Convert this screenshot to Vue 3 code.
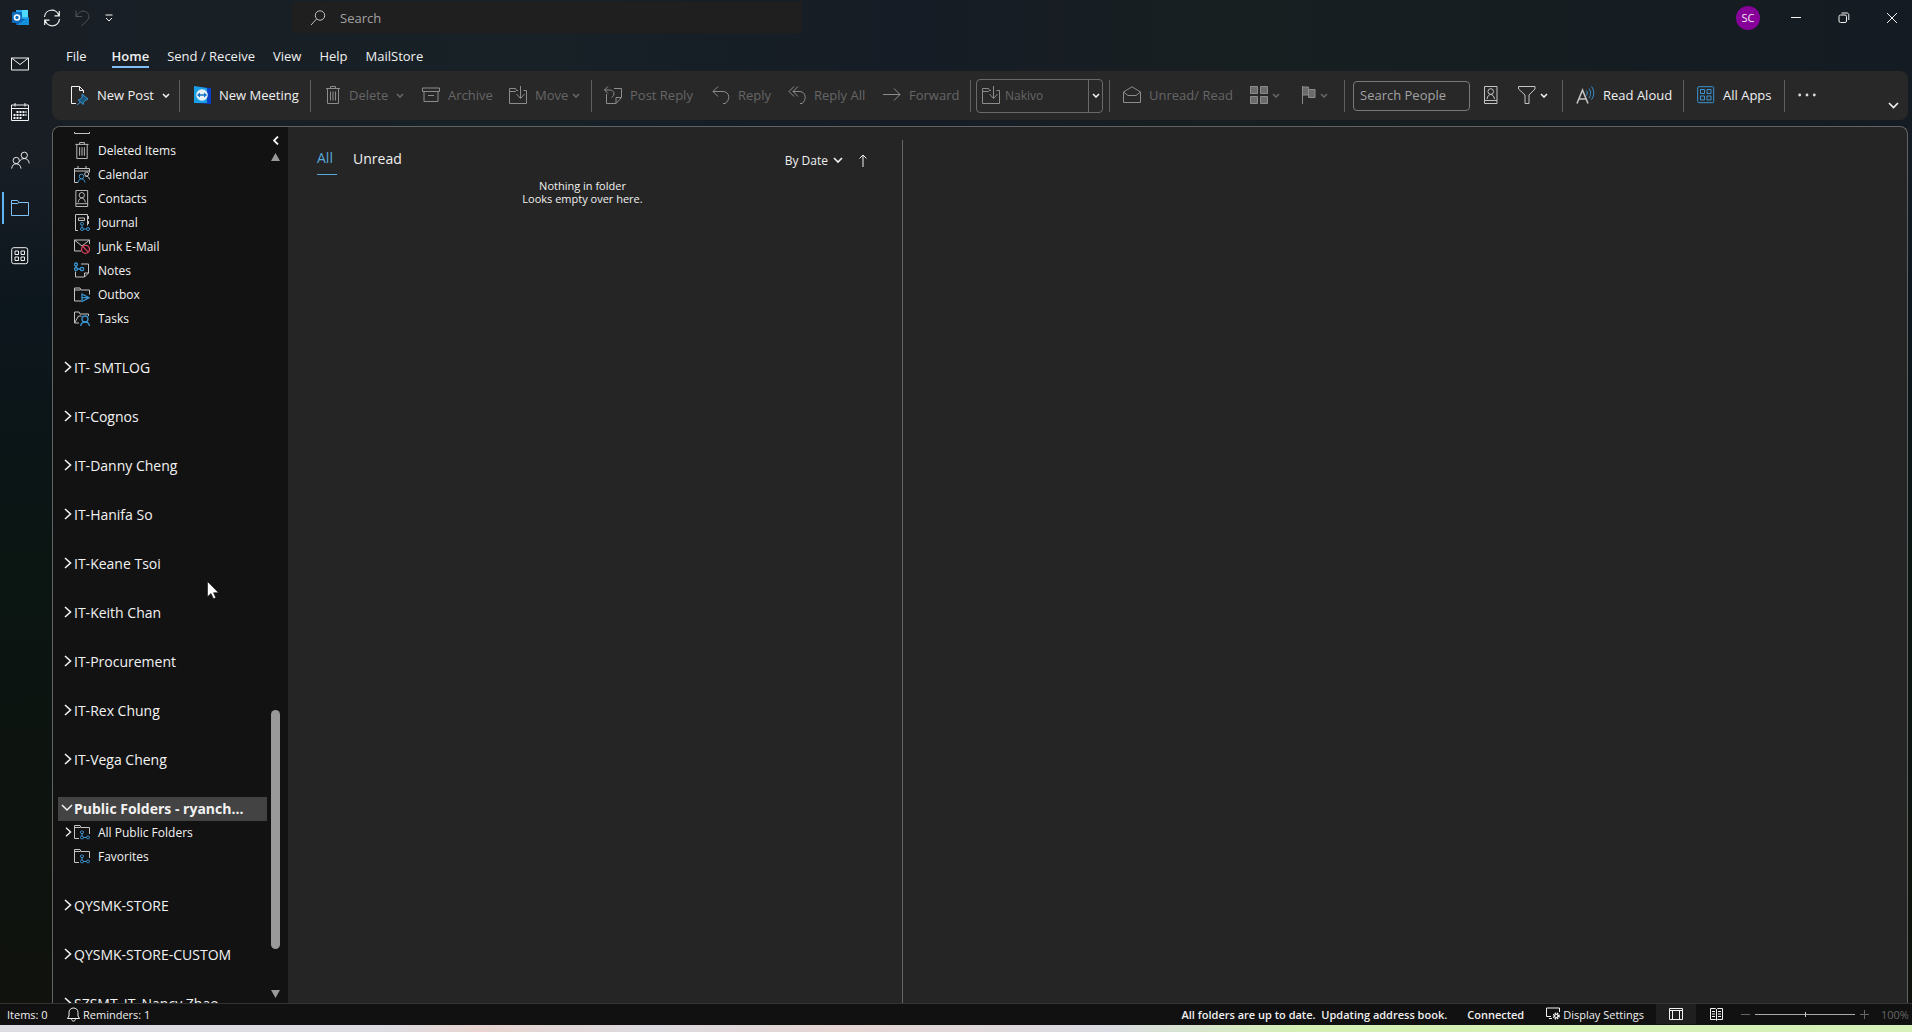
<script setup>
import { ref } from 'vue'

const search = ref('')
const people = ref('')
const zoom = ref(50)

const tabs = ['File', 'Home', 'Send / Receive', 'View', 'Help', 'MailStore']

const defaultFolders = [
  { name: 'Deleted Items', icon: 'trash' },
  { name: 'Calendar', icon: 'calendar' },
  { name: 'Contacts', icon: 'contacts' },
  { name: 'Journal', icon: 'journal' },
  { name: 'Junk E-Mail', icon: 'junk' },
  { name: 'Notes', icon: 'notes' },
  { name: 'Outbox', icon: 'outbox' },
  { name: 'Tasks', icon: 'tasks' },
]

const accounts = [
  { name: 'IT- SMTLOG' },
  { name: 'IT-Cognos' },
  { name: 'IT-Danny Cheng' },
  { name: 'IT-Hanifa So' },
  { name: 'IT-Keane Tsoi' },
  { name: 'IT-Keith Chan' },
  { name: 'IT-Procurement' },
  { name: 'IT-Rex Chung' },
  { name: 'IT-Vega Cheng' },
  {
    name: 'Public Folders - ryanch...',
    open: true,
    children: [{ name: 'All Public Folders', expandable: true }, { name: 'Favorites' }],
  },
  { name: 'QYSMK-STORE' },
  { name: 'QYSMK-STORE-CUSTOM' },
  { name: 'SZSMT_IT_Nancy Zhao' },
]
</script>

<template>
  <div class="app">
    <svg class="defs" width="0" height="0" aria-hidden="true">
      <symbol id="chev" viewBox="0 0 8 5"><path d="M1 1l3 3 3-3" fill="none" stroke="currentColor" stroke-width="1.6" /></symbol>
      <symbol id="chev-right" viewBox="0 0 8 12"><path d="M1 1l5.500 5L1 11" fill="none" stroke="currentColor" stroke-width="1.6" /></symbol>
      <symbol id="trash" viewBox="0 0 16 18"><path d="M1 2.500h14M5.500 2.500v-2h5v2M2.500 2.500v15h11v-15M5.500 5.500v9M8 5.500v9M10.500 5.500v9" /></symbol>
      <symbol id="movefolder" viewBox="0 0 18 18"><path d="M9 4.500H7.500L6.500 2.500h-6v15h17v-13h-3M.5 5.500h6l1-1M11.500 0v12M7.500 8l4 4.500 4-4.500" /></symbol>
      <symbol id="contacts" viewBox="0 0 14 18"><path d="M.5.5h12.500v17H.5zM.5 14.500h12.500M3 13c.5-3 2-4.500 3.750-4.500S10 10 10.500 13" /><circle cx="6.750" cy="5.500" r="2.800" /></symbol>
      <symbol id="calendar" viewBox="0 0 16 17"><path d="M4 16.500H.5V2.500h15v4M.5 5h15M4 0v3M12 0v3" /><circle cx="12.700" cy="8" r="2" /><path d="M11.500 10.500c2-.8 3.500.5 4 3" /><g class="blue"><circle cx="7.500" cy="10.500" r="2.300" /><path d="M4 16.500c.5-2.500 1.700-3.600 3.500-3.600s3 1.100 3.500 3.600" /></g></symbol>
      <symbol id="journal" viewBox="0 0 16 17"><path d="M4 16.500H1.500V.5h12v11M4.500 4h6v2.500h-6zM14.500 2v3M14.500 7v3" /><use href="#nodes" class="blue" x="5" y="8" width="11" height="9" /></symbol>
      <symbol id="nodes" viewBox="0 0 11 9"><circle cx="3" cy="1.700" r="1.500" /><path d="M3 3.500v2M4.500 7h3" /><circle cx="3" cy="7" r="1.500" /><circle cx="9" cy="7" r="1.500" /></symbol>
      <symbol id="junk" viewBox="0 0 16 16"><path d="M7 12.500H.5v-11h15v4M.5 1.500l7.500 6 7.500-6" /><g class="red" stroke-width="1.300"><circle cx="11.500" cy="10.800" r="4" /><path d="M8.700 8l5.600 5.600" /></g></symbol>
      <symbol id="notes" viewBox="0 0 16 16"><path d="M1.500 9v5.500h9l4-4V1.500H7M10.500 14.500v-4h4" /><g class="blue" stroke-width="1.300"><circle cx="2" cy="2" r="1.500" /><circle cx="2" cy="6.500" r="1.500" /><circle cx="8" cy="6.500" r="1.700" /><path d="M2 3.500v1.500M3.500 6.500h3" /></g></symbol>
      <symbol id="outbox" viewBox="0 0 16 16"><path d="M7 14.500H.5v-13H6l1 2h8.500V8M.5 3.500h6" /><path class="blue" stroke-width="1.300" d="M8 7.500l7 3.700-7 3.800v-3zM8 11.200h7" /></symbol>
      <symbol id="tasks" viewBox="0 0 16 16"><path d="M5 12.500H.5v-11H5l1 2h8.500v2M.5 12.500L4.500 5.500h3" /><g class="blue" stroke-width="1.300"><circle cx="11" cy="8.500" r="3" /><path d="M6.700 15.500c.4-2.700 2-4 4.300-4s4 1.300 4.500 4" /></g></symbol>
      <symbol id="shared" viewBox="0 0 16 16"><path d="M5 14.500H.5v-13H6l1 2h8.500V10M.5 3.500h6" /><use href="#nodes" class="blue" x="5" y="6.500" width="11" height="9" /></symbol>
    </svg>

    <header class="titlebar">
      <div class="quick">
        <svg class="logo" width="17" height="17" viewBox="0 0 17 17"><path fill="#28a8ea" d="M4 1h12v14H4z" /><path fill="#50d9ff" d="M10 1h6v7h-6z" /><path fill="#0a5ca8" d="M4 10h13v6H4z" /><path fill="#1490df" d="M10 12l7-4v8H5z" /><rect fill="#0f6cbd" y="3" width="10" height="11" rx="1" /><circle cx="5" cy="8.500" r="2.500" fill="none" stroke="#fff" stroke-width="1.600" /></svg>
        <button aria-label="Send and receive all folders"><svg width="18" height="18" viewBox="0 0 18 18" class="ic bright"><path stroke-width="1.200" d="M1.500 8A7.300 7.300 0 0 1 15.800 6.500M16.500 10A7.300 7.300 0 0 1 2.200 11.500M16.300 2v4.800h-4.800M1.700 16v-4.800h4.800" /></svg></button>
        <button aria-label="Undo" disabled><svg width="16" height="18" viewBox="0 0 16 18" class="ic dim"><path d="M1 1.500v6h6M1 7.500C4 3 7 1 10.500 2.500c4 2 4.500 6 1.500 9L6.500 17" /></svg></button>
        <button aria-label="Customize quick access toolbar"><svg width="8" height="8" viewBox="0 0 8 8" class="ic bright"><path d="M.5 1h7M1 4l3 3 3-3" /></svg></button>
      </div>
      <label class="search">
        <svg width="16" height="16" viewBox="0 0 16 16" class="ic"><circle cx="10" cy="5.500" r="4.700" /><path d="M6.500 9L1 15" /></svg>
        <input v-model="search" type="text" placeholder="Search" aria-label="Search" />
      </label>
      <button class="avatar" aria-label="Account">SC</button>
      <div class="window-controls">
        <button aria-label="Minimize"><svg width="12" height="12" viewBox="0 0 12 12" class="ic bright"><path d="M1 5.500h10" /></svg></button>
        <button aria-label="Restore"><svg width="12" height="12" viewBox="0 0 12 12" class="ic bright"><rect x="1" y="3" width="7.500" height="7.500" rx="1.500" /><path d="M3.500 1h5.500c1 0 1.800.8 1.800 1.800v5.200" /></svg></button>
        <button aria-label="Close"><svg width="12" height="12" viewBox="0 0 12 12" class="ic bright"><path d="M1 1l10 10M11 1L1 11" /></svg></button>
      </div>
    </header>

    <div class="body">
      <nav class="rail" aria-label="Modules">
        <button aria-label="Mail"><svg width="18" height="18" viewBox="0 0 18 18" class="ic bright"><path d="M.5 3h17v12H.5zM.5 3L9 9.500 17.500 3" /></svg></button>
        <button aria-label="Calendar"><svg width="18" height="18" viewBox="0 0 18 18" class="ic bright"><path d="M.5 2h17v15.500H.5zM.5 5.500h17M4 0v3.500M14 0v3.500" /><path stroke-dasharray="2 1" stroke-width="2" d="M5.500 9h10M2.500 12h13M2.500 15h8" /></svg></button>
        <button aria-label="People"><svg width="19" height="19" viewBox="0 0 20 19" class="ic bright"><circle cx="5.500" cy="9.500" r="3.300" /><circle cx="14" cy="4" r="3.300" /><path d="M.7 18c.5-3.500 2-5 4.800-5s4.500 1.500 5 5M9 10.500c1-2 2.500-3 5-3 3 0 4.700 1.500 5.200 5" /></svg></button>
        <button class="active" aria-label="Folders"><svg width="18" height="18" viewBox="0 0 18 18" class="ic"><path d="M.5 16.500v-15h6l1.500 2h9.500v13zM.5 4.500h6l1.500-1" /></svg></button>
        <button aria-label="More apps"><svg width="18" height="18" viewBox="0 0 18 18" class="ic bright"><rect x=".7" y=".7" width="16" height="16" rx="2" /><path d="M4 4h3.500v3.500H4zM10 4h3.500v3.500H10zM4 10h3.500v3.500H4zM10 10h3.500v3.500H10z" /></svg></button>
      </nav>

      <div class="workspace">
        <nav class="tabs" aria-label="Ribbon tabs">
          <button v-for="t in tabs" :key="t" :class="{ current: t === 'Home' }">{{ t }}</button>
        </nav>

        <div class="ribbon">
          <button class="post"><svg width="18" height="19" viewBox="0 0 18 19" class="ic bright"><path d="M5 17.500H.5V.5h8l4 4V7M8.500.5v4h4" /><path class="blue" fill="#1c557a" d="M11 8l6 5-1.500 1-1 .2-2 2.300-.3 2-5-4.500 2-.5 2-2.500zM9.500 16L6 19" /></svg>New Post<svg class="chev"><use href="#chev" /></svg></button>
          <i class="sep"></i>
          <button><svg width="17" height="18" viewBox="0 0 17 18"><path fill="#0a3fc4" d="M2 1l15 1v16L2 17z" /><path fill="#1ba0e8" d="M0 0l13 2v15L0 17z" /><circle cx="8" cy="9" r="5.800" fill="#e8f0f8" /><path fill="#1172c8" d="M3 9l3-2.500v1.700h4V6.500L13 9l-3 2.500V9.800H6v1.700z" /></svg>New Meeting</button>
          <i class="sep"></i>
          <button disabled><svg width="16" height="18" class="ic"><use href="#trash" /></svg>Delete<svg class="chev"><use href="#chev" /></svg></button>
          <button disabled><svg width="18" height="16" viewBox="0 0 18 16" class="ic"><path d="M.5 1h17v3.500H.5zM2 4.500v10h14v-10M6 8.500h6" /></svg>Archive</button>
          <button disabled class="tight"><svg width="18" height="18" class="ic"><use href="#movefolder" /></svg>Move<svg class="chev"><use href="#chev" /></svg></button>
          <i class="sep"></i>
          <button disabled><svg width="18" height="18" viewBox="0 0 18 18" class="ic"><path d="M10 2.500h7.500v9l-5.500 6H2.500V8M12 17.500v-6h5.500M4 .5L.5 4 4 7.500M.5 4h5c5 0 6 5 2 7.500" /></svg>Post Reply</button>
          <button disabled><svg width="18" height="18" viewBox="0 0 18 18" class="ic"><path d="M6 .5L1 5.500l5 5M1 5.500h10c7 0 7.500 9 2 12h-2" /></svg>Reply</button>
          <button disabled><svg width="18" height="18" viewBox="0 0 18 18" class="ic"><path d="M6 .5L1 5.500l5 5M10 .5L5 5.500l5 5M5 5.500h7c6.500.500 6.500 9 2 12h-2" /></svg>Reply All</button>
          <button disabled><svg width="18" height="18" viewBox="0 0 18 18" class="ic"><path d="M0 8.500h17M11 2.500l6 6-6 6" /></svg>Forward</button>
          <i class="sep"></i>
          <div class="combo">
            <button disabled><svg width="18" height="18" class="ic"><use href="#movefolder" /></svg>Nakivo</button>
            <button class="drop" aria-label="Quick steps"><svg class="chev"><use href="#chev" /></svg></button>
          </div>
          <i class="sep"></i>
          <button disabled><svg width="18" height="18" viewBox="0 0 18 18" class="ic"><path d="M.5 6v10.500h17V6L9 .8zM.5 6L5 9.500h8L17.500 6" /></svg>Unread/ Read</button>
          <button disabled class="snug" aria-label="Categorize"><svg width="18" height="18" viewBox="0 0 18 18" class="ic"><path fill="#6b6b6b" d="M.5.5h7v7h-7zM10.500.5h7v7h-7zM.5 10.500h7v7h-7zM10.500 10.500h7v7h-7z" /></svg><svg class="chev"><use href="#chev" /></svg></button>
          <button disabled class="snug" aria-label="Follow up"><svg width="14" height="18" viewBox="0 0 14 18" class="ic"><path fill="#6b6b6b" d="M.5 1h6v2.500h6.500v8H6.500V9h-6z" /><path d="M.5 0v18M6.500 3.500V9" /></svg><svg class="chev"><use href="#chev" /></svg></button>
          <i class="sep"></i>
          <input v-model="people" type="text" placeholder="Search People" aria-label="Search People" />
          <button aria-label="Address book"><svg width="14" height="18" class="ic"><use href="#contacts" /></svg></button>
          <button class="snug" aria-label="Filter email"><svg width="18" height="18" viewBox="0 0 18 18" class="ic"><path d="M.5.5h16.500v2.500l-6 6v8.500h-4V9L.5 3z" /></svg><svg class="chev"><use href="#chev" /></svg></button>
          <i class="sep"></i>
          <button><svg width="19" height="18" viewBox="0 0 19 18" class="ic"><path stroke-width="1.600" d="M1 17.500L6.500 4 12 17.500M3 13h7" /><path class="blue" d="M10.500 4.500c1 1.500 1 3.500 0 5M13 2.500c2 3 2 6.500 0 9.500M15.500.5c3 4 3 9 0 13" /></svg>Read Aloud</button>
          <i class="sep"></i>
          <button><svg width="18" height="18" viewBox="0 0 18 18" class="ic"><g class="blue"><rect x=".7" y=".7" width="16" height="16" rx="1" /><path d="M3.500 3.500h4v4h-4zM10 3.500h4v4h-4zM3.500 10h4v4h-4zM10 10h4v4h-4z" /></g></svg>All Apps</button>
          <i class="sep"></i>
          <button aria-label="More commands"><svg width="18" height="4" viewBox="0 0 18 4" fill="#ddd"><circle cx="1.700" cy="2" r="1.400" /><circle cx="9" cy="2" r="1.400" /><circle cx="16.300" cy="2" r="1.400" /></svg></button>
          <button class="collapse" aria-label="Collapse ribbon"><svg width="11" height="7" viewBox="0 0 11 7" class="ic bright"><path stroke-width="1.600" d="M1 1l4.500 4.500L10 1" /></svg></button>
        </div>

        <main class="panel">
          <aside class="sidebar">
            <div class="tree">
              <div class="cut"><svg width="16" height="12" viewBox="0 0 16 12" class="ic"><path d="M.5 0v11.500h15V0" /></svg></div>
              <a v-for="f in defaultFolders" :key="f.name" href="#" class="row child">
                <span class="arrow"></span>
                <svg width="16" height="17" class="ic"><use :href="'#' + f.icon" /></svg>{{ f.name }}
              </a>
              <template v-for="a in accounts" :key="a.name">
                <a href="#" class="row root" :class="{ selected: a.open }">
                  <span class="arrow">
                    <svg v-if="a.open" width="12" height="8" viewBox="0 0 12 8" class="ic bright"><path stroke-width="1.500" d="M1 1l5 5 5-5" /></svg>
                    <svg v-else width="8" height="12" class="ic bright"><use href="#chev-right" /></svg>
                  </span>{{ a.name }}
                </a>
                <a v-for="c in a.children" :key="c.name" href="#" class="row child">
                  <span class="arrow"><svg v-if="c.expandable" width="7" height="10" class="ic bright"><use href="#chev-right" /></svg></span>
                  <svg width="16" height="16" class="ic"><use href="#shared" /></svg>{{ c.name }}
                </a>
              </template>
            </div>
            <div class="gutter">
              <button aria-label="Minimize folder pane"><svg width="6" height="9" viewBox="0 0 6 9" class="ic bright"><path stroke-width="1.800" d="M5 .5l-4 4 4 4" /></svg></button>
              <svg width="9" height="8" viewBox="0 0 9 8"><path fill="#999" d="M4.500 0L9 8H0z" /></svg>
              <div class="track"><div class="thumb"></div></div>
              <svg width="9" height="8" viewBox="0 0 9 8"><path fill="#999" d="M4.500 8L9 0H0z" /></svg>
            </div>
          </aside>

          <section class="list">
            <div class="list-head">
              <button class="on">All</button>
              <button>Unread</button>
              <button class="sort">By Date<svg width="10" height="7" viewBox="0 0 10 7" class="ic bright"><path stroke-width="1.600" d="M1 1l4 4 4-4" /></svg></button>
              <button class="dir" aria-label="Reverse sort"><svg width="8" height="13" viewBox="0 0 8 13" class="ic bright"><path d="M4 13V1M.5 4.500L4 1l3.500 3.500" /></svg></button>
            </div>
            <p>Nothing in folder<br />Looks empty over here.</p>
          </section>
          <section class="reading" aria-label="Reading pane"></section>
        </main>
      </div>
    </div>

    <footer class="status">
      <span class="items">Items: 0</span>
      <svg width="13" height="15" viewBox="0 0 13 15" class="ic bright"><path d="M.5 11.500h12l-1.500-2.500V5.500c0-6-9-6-9 0V9zM4.500 11.500c0 3.500 4 3.500 4 0" /></svg>
      <span class="reminders">Reminders: 1</span>
      <span class="sync">All folders are up to date.&nbsp; Updating address book.</span>
      <span class="conn">Connected</span>
      <button class="display"><svg width="15" height="14" viewBox="0 0 15 14" class="ic bright"><path d="M5 9.500H.5V1h13v4M3 11.500h3" /><circle cx="10.300" cy="9" r="2.500" stroke-width="2" stroke-dasharray="1.300 .7" /><circle cx="10.300" cy="9" r="1.600" /></svg>Display Settings</button>
      <button class="view on" aria-label="Normal view"><svg width="14" height="12" viewBox="0 0 14 12" class="ic bright"><path d="M.5.5h13v11H.5zM.5 2.500h13M3.500 2.500v9M10.500 2.500v9" /></svg></button>
      <button class="view" aria-label="Reading view"><svg width="13" height="13" viewBox="0 0 13 13" class="ic bright"><path d="M.5.500h5l1 1 1-1h5v11h-5l-1 1-1-1h-5zM6.500 1v11M2 3.500h3M2 6h3M2 8.500h3M8 3.500h3M8 6h3M8 8.500h3" /></svg></button>
      <button class="step" aria-label="Zoom out"><svg width="9" height="9" viewBox="0 0 9 9" class="ic"><path d="M0 4.500h9" /></svg></button>
      <input v-model="zoom" type="range" min="0" max="100" aria-label="Zoom" />
      <button class="step" aria-label="Zoom in"><svg width="9" height="9" viewBox="0 0 9 9" class="ic"><path d="M0 4.500h9M4.500 0v9" /></svg></button>
      <span class="pct">100%</span>
    </footer>
    <div class="desktop-edge"></div>

    <svg class="cursor" width="12" height="19" viewBox="0 0 12 19"><path fill="#fff" stroke="#111" stroke-width=".6" d="M.5.5v15.200l3.500-3.200 2.500 5.300 2.300-1-2.300-5.100h5z" /></svg>
  </div>
</template>

<style>
body {
  background: #10151a;
}
</style>

<style scoped>
* {
  box-sizing: border-box;
}
.app {
  height: 100vh;
  display: flex;
  flex-direction: column;
  overflow: hidden;
  position: relative;
  font-family: 'Open Sans', 'Noto Sans', sans-serif;
  font-size: 13px;
  color: #f0f0f0;
  background:
    linear-gradient(180deg, transparent 0 15%, rgba(9, 20, 27, 0.8) 30%, rgba(9, 20, 16, 0.9) 55%, #10120d 100%),
    linear-gradient(90deg, #191e25 0%, #172126 28%, #161c25 48%, #181f21 64%, #141b22 100%);
}
.defs {
  position: absolute;
}
button {
  border: 0;
  padding: 0;
  background: none;
  font: inherit;
  color: inherit;
  display: flex;
  align-items: center;
  white-space: nowrap;
}
input {
  font: inherit;
  color: inherit;
  outline: none;
  min-width: 0;
}
input::placeholder {
  color: #a2a2a2;
  opacity: 1;
}
svg {
  flex: none;
}
.ic {
  fill: none;
  stroke: #c4c4c4;
}
.ic.bright {
  stroke: #f2f2f2;
}
.ic.dim {
  stroke: #50545a;
}
.blue {
  stroke: #3b94d1;
}
.red {
  stroke: #d8405c;
}
.chev {
  width: 8px;
  height: 5px;
}

.titlebar {
  height: 35px;
  flex: none;
  display: flex;
  align-items: center;
}
.quick {
  width: 292px;
  display: flex;
  align-items: center;
  padding-left: 12px;
  gap: 14px;
}
.search {
  width: 510px;
  height: 31px;
  background: #1f1f1f;
  display: flex;
  align-items: center;
  padding-left: 18px;
  gap: 14px;
}
.search input {
  flex: 1;
  border: 0;
  padding: 0;
  background: none;
}
.avatar {
  width: 24px;
  height: 24px;
  margin-left: auto;
  border-radius: 50%;
  background: #87009a;
  justify-content: center;
  font-size: 11px;
}
.window-controls {
  display: flex;
  align-items: center;
  padding: 0 14px 0 30px;
  gap: 36px;
}

.body {
  flex: 1;
  min-height: 0;
  display: flex;
}
.rail {
  width: 52px;
  flex: none;
  padding-top: 5px;
}
.rail button {
  width: 100%;
  height: 48px;
  padding-left: 11px;
}
.rail .active {
  position: relative;
}
.rail .active::before {
  content: '';
  position: absolute;
  left: 2px;
  top: 8px;
  width: 2px;
  height: 32px;
  background: #62b5f5;
}
.rail .active svg {
  stroke: #80c3f4;
}
.workspace {
  flex: 1;
  min-width: 0;
  display: flex;
  flex-direction: column;
  padding-right: 4px;
}
.tabs {
  height: 36px;
  flex: none;
  display: flex;
  align-items: flex-end;
  padding: 0 0 3px 14px;
  gap: 18px;
}
.tabs button {
  height: 22px;
  border-bottom: 2px solid transparent;
}
.tabs button:first-child {
  margin-right: 7px;
}
.tabs .current {
  font-weight: 600;
  border-color: #80bdf5;
}
.ribbon {
  height: 49px;
  flex: none;
  background: #282828;
  border-radius: 8px;
  padding-left: 19px;
  display: grid;
  align-items: center;
  grid-template-columns:
    108px 15px 116px 15px 97px 87px 82px 13px 108px 76px 95px 87px 6px 133px 14px
    127px 52px 42px 9px 131px 34px 44px 14px 107px 14px 87px 14px 18px 1fr;
}
.ribbon button {
  gap: 8px;
  height: 32px;
  padding-bottom: 1px;
}
.ribbon .tight,
.ribbon .snug {
  gap: 4px;
}
.ribbon .tight .ic {
  margin-right: 4px;
}
.ribbon button:disabled {
  color: #666;
}
.ribbon button:disabled .ic {
  stroke: #8c8c8c;
}
.sep {
  width: 1px;
  height: 32px;
  background: #5e5e5e;
}
.combo {
  width: 127px;
  height: 34px;
  border: 1px solid #6a6a6a;
  border-radius: 4px;
  display: flex;
}
.combo button {
  flex: 1;
  padding-left: 5px;
  gap: 5px;
  font-size: 12px;
}
.combo .drop {
  flex: 0 0 14px;
  padding-left: 3px;
  border-left: 1px solid #6a6a6a;
}
.ribbon input {
  width: 117px;
  height: 30px;
  border: 1px solid #7a7a7a;
  border-radius: 4px;
  background: none;
  padding: 0 6px 1px;
}
.ribbon .collapse {
  justify-self: end;
  align-self: end;
  height: 28px;
  padding-right: 9px;
}

.panel {
  flex: 1;
  min-height: 0;
  margin-top: 6px;
  display: flex;
  border: 1px solid #626262;
  border-bottom: 0;
  border-radius: 8px 8px 0 0;
  background: #252525;
  overflow: hidden;
}
.sidebar {
  width: 235px;
  flex: none;
  display: flex;
  background: #121212;
}
.tree {
  width: 214px;
  padding: 5px 0 0 5px;
  overflow: hidden;
}
.cut {
  height: 7px;
  padding: 0 0 5px 16px;
  display: flex;
  align-items: flex-end;
  overflow: hidden;
}
.row {
  height: 24px;
  padding-bottom: 2px;
  display: flex;
  align-items: center;
  white-space: nowrap;
  color: #f2f2f2;
  text-decoration: none;
}
.arrow {
  width: 16px;
  flex: none;
  display: flex;
  justify-content: flex-end;
  padding-right: 2px;
}
.child {
  font-size: 12px;
}
.child .ic:not(.bright) {
  margin-right: 8px;
}
.root {
  font-size: 14px;
  margin-top: 25px;
}
.selected {
  background: #434343;
  font-weight: 700;
}
.selected .arrow {
  padding-right: 1px;
}
.gutter {
  flex: 1;
  display: flex;
  flex-direction: column;
  align-items: center;
  padding: 9px 4px 5px 0;
}
.gutter button {
  margin-bottom: 8px;
}
.track {
  flex: 1;
  width: 9px;
  margin: 3px 0;
  display: flex;
  flex-direction: column;
}
.thumb {
  height: 29%;
  margin-top: auto;
  margin-bottom: 38px;
  border-radius: 5px;
  background: #999;
}
.list {
  width: 615px;
  flex: none;
  position: relative;
}
.list::after {
  content: '';
  position: absolute;
  right: 0;
  top: 13px;
  bottom: 0;
  width: 1px;
  background: #666;
}
.list-head {
  display: flex;
  align-items: center;
  height: 34px;
  margin: 14px 36px 0 29px;
  font-size: 14px;
  gap: 16px;
}
.list-head button {
  height: 34px;
}
.list-head .on {
  width: 20px;
  color: #5aa9dd;
  border-bottom: 1px solid #5aa9dd;
}
.list-head .sort,
.list-head .dir {
  padding-top: 4px;
}
.list-head .sort {
  margin-left: auto;
  font-size: 12px;
  gap: 5px;
}
.list p {
  margin: 4px 0 0;
  padding-right: 26px;
  text-align: center;
  font-size: 11px;
  line-height: 13px;
}
.reading {
  flex: 1;
}

.status {
  height: 22px;
  flex: none;
  display: flex;
  align-items: center;
  background: #111;
  border-top: 1px solid #333;
  font-size: 11px;
  white-space: nowrap;
  padding: 0 4px 1px 7px;
}
.items {
  width: 60px;
}
.reminders {
  margin-left: 3px;
}
.sync,
.conn {
  font-weight: 600;
}
.sync {
  margin-left: auto;
}
.conn {
  margin: 0 22px 0 20px;
}
.display {
  gap: 2px;
  margin-right: 12px;
}
.view {
  width: 40px;
  height: 20px;
  justify-content: center;
}
.view.on {
  background: #1f1f1f;
}
.step {
  margin: 0 5px;
}
.step .ic {
  stroke: #666;
}
.status input {
  appearance: none;
  width: 100px;
  height: 12px;
  margin: 0;
  background: linear-gradient(#aaa, #aaa) center / 100% 1px no-repeat;
}
.status input::-webkit-slider-thumb {
  appearance: none;
  width: 1px;
  height: 5px;
  background: #ccc;
}
.pct {
  width: 27px;
  margin-left: 7px;
  color: #666;
}
.desktop-edge {
  height: 7px;
  flex: none;
  background: linear-gradient(90deg, #dcdce2 0 20%, #e8d4d0 25%, #dcdadf 34%, #e6d5d3 44%, #dadbe2 58%, #d4f0b4 68%, #d6f2ba 100%);
}
.cursor {
  position: absolute;
  left: 207px;
  top: 581px;
}
</style>
